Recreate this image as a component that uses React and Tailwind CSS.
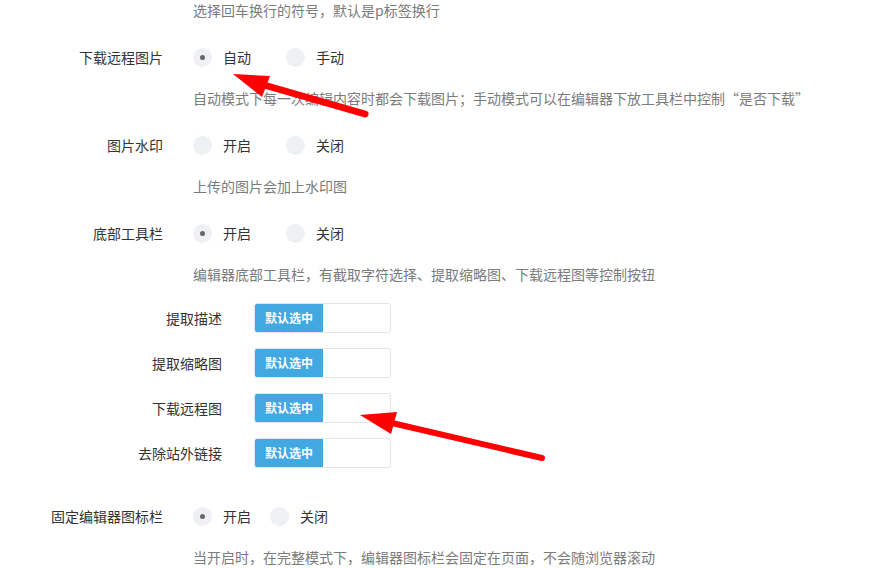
const font = { fontFamily: '"Noto Sans CJK SC", "Noto Sans", sans-serif' }

function Radio({ label, checked }) {
  return (
    <label className="flex items-center">
      <span className="w-[19px] h-[19px] rounded-full bg-[#eef0f4] flex items-center justify-center">
        {checked && <span className="w-[5px] h-[5px] rounded-full bg-[#666]" />}
      </span>
      <span className="ml-[11px] text-[14px] text-[#333]">{label}</span>
    </label>
  )
}

function FormRow({ label, options, checked, gap = "gap-[35px]", hint }) {
  return (
    <div>
      <div className="flex items-center h-[36px]">
        <div className="w-[163px] text-right text-[14px] text-[#333]">{label}</div>
        <div className={`ml-[30px] flex items-center ${gap}`}>
          {options.map((o, i) => (
            <Radio key={o} label={o} checked={i === checked} />
          ))}
        </div>
      </div>
      <div className="mt-[13px] ml-[193px] h-[20px] leading-[20px] text-[14px] text-[#7b7b7b] whitespace-nowrap">
        {hint}
      </div>
    </div>
  )
}

function CheckRow({ label }) {
  return (
    <div className="flex items-center h-[30px]">
      <div className="w-[222px] text-right text-[14px] text-[#333]">{label}</div>
      <div className="ml-[32px] flex w-[137px] h-[30px] rounded-[3px] border border-[#e3e5ec] overflow-hidden">
        <span className="w-[68px] bg-[#41a8e1] text-white text-[12px] font-bold flex items-center justify-center">
          默认选中
        </span>
      </div>
    </div>
  )
}

export default function App() {
  return (
    <div className="relative w-[871px] h-[568px] bg-white overflow-hidden" style={font}>
      <div className="pt-0">
        <div className="ml-[193px] h-[20px] leading-[20px] text-[14px] text-[#7b7b7b]">
          选择回车换行的符号，默认是p标签换行
        </div>

        <div className="mt-[19px] flex flex-col gap-[19px]">
          <FormRow
            label="下载远程图片"
            options={["自动", "手动"]}
            checked={0}
            hint="自动模式下每一次编辑内容时都会下载图片；手动模式可以在编辑器下放工具栏中控制“是否下载”"
          />
          <FormRow
            label="图片水印"
            options={["开启", "关闭"]}
            checked={-1}
            hint="上传的图片会加上水印图"
          />
          <FormRow
            label="底部工具栏"
            options={["开启", "关闭"]}
            checked={0}
            hint="编辑器底部工具栏，有截取字符选择、提取缩略图、下载远程图等控制按钮"
          />
        </div>

        <div className="mt-[19px] flex flex-col gap-[15px]">
          <CheckRow label="提取描述" />
          <CheckRow label="提取缩略图" />
          <CheckRow label="下载远程图" />
          <CheckRow label="去除站外链接" />
        </div>

        <div className="mt-[30px]">
          <FormRow
            label="固定编辑器图标栏"
            options={["开启", "关闭"]}
            checked={0}
            gap="gap-[19px]"
            hint="当开启时，在完整模式下，编辑器图标栏会固定在页面，不会随浏览器滚动"
          />
        </div>
      </div>

      {/* annotation arrows */}
      <svg className="absolute inset-0 pointer-events-none" width="871" height="568">
        <line x1="264" y1="85" x2="365" y2="114" stroke="#f00" strokeWidth="7" strokeLinecap="round" />
        <polygon points="233,74 270,76 262,97" fill="#f00" />
        <line x1="392" y1="423" x2="542" y2="458" stroke="#f00" strokeWidth="6" strokeLinecap="round" />
        <polygon points="360,415 397,412 391,434" fill="#f00" />
      </svg>
    </div>
  )
}
